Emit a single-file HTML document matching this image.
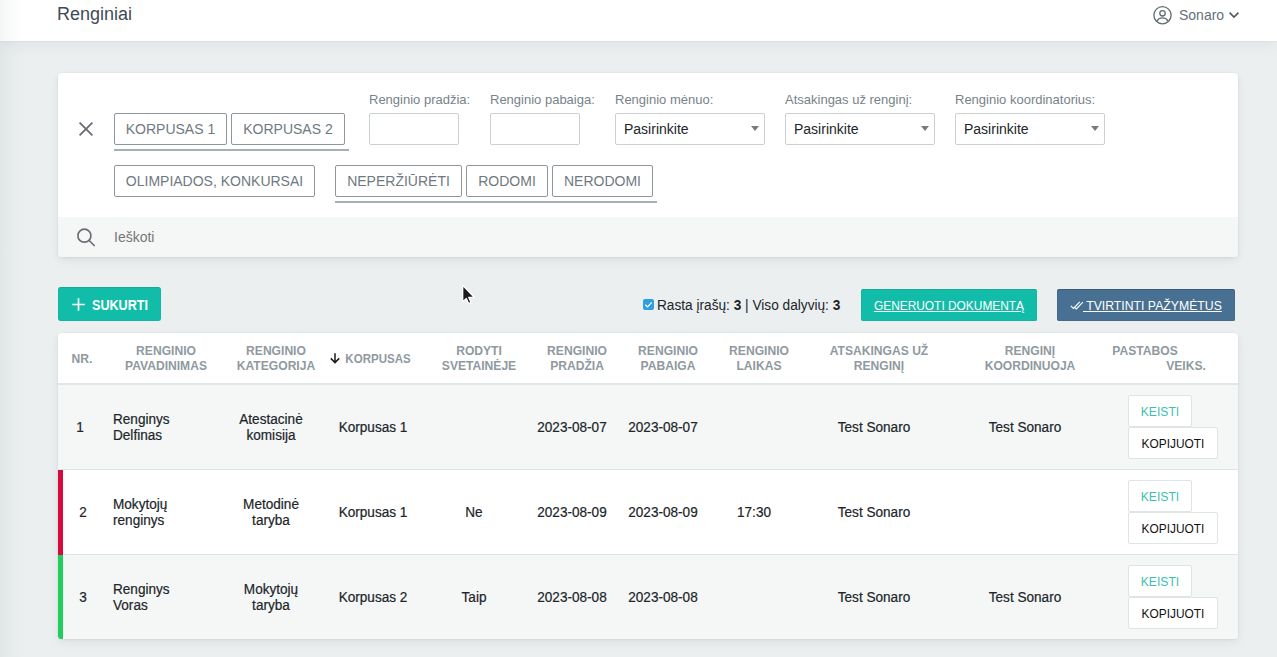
<!DOCTYPE html>
<html lang="lt">
<head>
<meta charset="utf-8">
<title>Renginiai</title>
<style>
*{box-sizing:border-box;margin:0;padding:0}
html,body{width:1277px;height:657px;overflow:hidden}
body{position:relative;background:#ebeff0;font-family:"Liberation Sans",sans-serif;color:#212529;font-size:14px}
.a{position:absolute;white-space:nowrap}
.c{transform:translateX(-50%)}
/* header */
#hdr{left:0;top:0;width:1277px;height:41px;background:#fff;box-shadow:0 1px 0 rgba(4,9,20,.02),0 6px 14px rgba(4,9,20,.04),0 3px 6px rgba(4,9,20,.012)}
#ttl{left:57px;top:1px;font-size:18px;line-height:26px;color:#3f4a56}
#usr{left:1179px;top:6px;font-size:14px;line-height:18px;color:#66717b}
/* left shade */
#lsh{left:0;top:0;width:24px;height:657px;background:linear-gradient(to right,rgba(60,80,90,.06),rgba(60,80,90,.025) 45%,rgba(60,80,90,0))}
/* cards */
.card{background:#fff;border-radius:4px;box-shadow:0 0 0 1px rgba(60,80,100,.025),0 4px 14px rgba(4,9,20,.03),0 3px 8px rgba(4,9,20,.04),0 1px 3px rgba(4,9,20,.03)}
#fc{left:58px;top:73px;width:1180px;height:184px}
#srow{left:0;top:144px;width:1180px;height:40px;background:#f5f7f6;border-radius:0 0 4px 4px}
.ob{height:32px;border:1px solid #90979c;border-radius:2px;background:#fff;color:#6f7981;font-size:14px;line-height:30px;text-align:center}
.ul{height:2px;background:#a6b0b4}
.lbl{font-size:13px;line-height:16px;color:#77828a}
.inp{height:32px;border:1px solid #c9d1d5;border-radius:2px;background:#fff}
.sel{width:150px;font-size:14px;line-height:30px;padding-left:8px;color:#212529}
.sel i{position:absolute;right:5px;top:12px;width:0;height:0;border-left:4px solid transparent;border-right:4px solid transparent;border-top:5px solid #7a7a7a}

.l{transform-origin:0 50%;transform:scaleX(var(--k,1))}
.c{transform:translateX(-50%) scaleX(var(--k,1))}
.tb{height:32px;border-radius:2px;color:#fff;font-size:12.800px;line-height:32px}
.th{font-size:12.800px;line-height:15px;font-weight:bold;color:#8f999f;text-align:center;--k:.945}
.td{font-size:14px;line-height:16px;color:#212529;--k:.97;-webkit-text-stroke:.200px #212529}
.row{left:58px;width:1180px}
.kb{height:32px;border:1px solid #dfe4e5;border-radius:2px;background:#fff;font-size:12.800px;line-height:29px}
</style>
</head>
<body>
<div id="hdr" class="a"></div>
<div id="ttl" class="a">Renginiai</div>
<svg class="a" style="left:1152px;top:5px" width="21" height="21" viewBox="0 0 21 21" fill="none" stroke="#5f6b75" stroke-width="1.3"><circle cx="10.5" cy="10.2" r="8.6"/><circle cx="10.5" cy="8.3" r="2.7"/><path d="M4.9 16.6c1-2.6 3.1-3.8 5.6-3.8s4.600 1.200 5.600 3.800"/></svg>
<div id="usr" class="a">Sonaro</div>
<svg class="a" style="left:1228px;top:10px" width="12" height="10" viewBox="0 0 12 10" fill="none" stroke="#4d5862" stroke-width="1.6"><path d="M1.600 2.600l4.400 4.400 4.400-4.400"/></svg>

<!-- FILTER CARD -->
<div id="fc" class="a card">
  <div id="srow" class="a"></div>
</div>
<!-- filters -->
<svg class="a" style="left:77px;top:120px" width="18" height="18" viewBox="0 0 18 18" fill="none" stroke="#676d72" stroke-width="1.800"><path d="M2.600 2.600l12.800 12.800M15.400 2.600L2.600 15.400"/></svg>
<div class="a ob" style="left:114px;top:113px;width:113px">KORPUSAS 1</div>
<div class="a ob" style="left:231px;top:113px;width:114px">KORPUSAS 2</div>
<div class="a ul" style="left:114px;top:149px;width:235px"></div>
<div class="a ob" style="left:114px;top:165px;width:201px">OLIMPIADOS, KONKURSAI</div>
<div class="a ob" style="left:335px;top:165px;width:127px">NEPERŽIŪRĖTI</div>
<div class="a ob" style="left:466px;top:165px;width:82px">RODOMI</div>
<div class="a ob" style="left:552px;top:165px;width:101px">NERODOMI</div>
<div class="a ul" style="left:335px;top:201px;width:322px"></div>
<div class="a lbl" style="left:369px;top:92px">Renginio pradžia:</div>
<div class="a lbl" style="left:490px;top:92px">Renginio pabaiga:</div>
<div class="a lbl" style="left:615px;top:92px">Renginio mėnuo:</div>
<div class="a lbl" style="left:785px;top:92px">Atsakingas už renginį:</div>
<div class="a lbl" style="left:955px;top:92px">Renginio koordinatorius:</div>
<div class="a inp" style="left:369px;top:113px;width:90px"></div>
<div class="a inp" style="left:490px;top:113px;width:90px"></div>
<div class="a inp sel" style="left:615px;top:113px">Pasirinkite<i></i></div>
<div class="a inp sel" style="left:785px;top:113px">Pasirinkite<i></i></div>
<div class="a inp sel" style="left:955px;top:113px">Pasirinkite<i></i></div>
<svg class="a" style="left:75px;top:226px" width="22" height="22" viewBox="0 0 22 22" fill="none" stroke="#696f74" stroke-width="1.700"><circle cx="9.400" cy="9.700" r="6.500"/><path d="M14.200 14.500l5 5" stroke-linecap="round"/></svg>
<div class="a" style="left:114px;top:228px;font-size:14px;line-height:18px;color:#767676">Ieškoti</div>

<!-- toolbar -->
<div class="a" style="left:58px;top:287px;width:103px;height:34px;border-radius:3px;background:#11bda9;border:1px solid #13b4a1;border-top-color:#17a896"></div>
<svg class="a" style="left:71px;top:297px" width="15" height="15" viewBox="0 0 15 15" fill="none" stroke="#fff" stroke-width="1.700"><path d="M7.500 1.200v12.600M1.200 7.500h12.600"/></svg>
<div class="a l" style="left:92px;top:296px;font-size:14px;line-height:18px;font-weight:bold;color:#fff;--k:.9">SUKURTI</div>
<div class="a" style="left:643px;top:299px;width:11px;height:11px;border-radius:2px;background:#2f9fe3"></div>
<svg class="a" style="left:643px;top:299px" width="11" height="11" viewBox="0 0 11 11" fill="none" stroke="#fff" stroke-width="1.200"><path d="M2.300 5.800l2.200 2.100 4.300-4.600"/></svg>
<div class="a l" style="left:657px;top:296px;font-size:14px;line-height:18px;color:#212529;--k:.976">Rasta įrašų: <b>3</b> | Viso dalyvių: <b>3</b></div>
<div class="a tb" style="left:861px;top:289px;width:176px;background:#11bda9;border:1px solid #13b4a1;border-top-color:#17a896"></div>
<div class="a c" style="left:949px;top:297px;font-size:12.800px;line-height:18px;color:#fff;text-decoration:underline;--k:.93">GENERUOTI DOKUMENTĄ</div>
<div class="a tb" style="left:1057px;top:289px;width:178px;background:#487092;border:1px solid #436a8a;border-top-color:#3b5d7b"></div>
<svg class="a" style="left:1070px;top:300px" width="14" height="11" viewBox="0 0 14 11" fill="none" stroke="#fff" stroke-width="1.100"><path d="M0.800 5.800l2.600 2.600 6.400-6.600M4.600 7.400l1.700 1.500 6.600-6.800"/></svg>
<div class="a l" style="left:1083px;top:297px;font-size:12.800px;line-height:18px;color:#fff;text-decoration:underline;white-space:pre;--k:.957"> TVIRTINTI PAŽYMĖTUS</div>

<!-- table -->
<div class="a card" style="left:58px;top:333px;width:1180px;height:306px"></div>
<div class="a row" style="top:383px;height:2px;background:#e1e6e7"></div>
<div class="a row" style="top:385px;height:84px;background:#f4f7f6"></div>
<div class="a row" style="top:469px;height:1px;background:#dfe4e6"></div>
<div class="a row" style="top:554px;height:1px;background:#dfe4e6"></div>
<div class="a row" style="top:555px;height:84px;background:#f4f7f6;border-radius:0 0 4px 4px"></div>
<div class="a" style="left:58px;top:470px;width:5px;height:85px;background:#d8093b"></div>
<div class="a" style="left:58px;top:555px;width:5px;height:84px;background:#1fce5d;border-radius:0 0 0 3px"></div>
<div class="a c th" style="left:82.3px;top:351px">NR.</div>
<div class="a c th" style="left:165.5px;top:343px">RENGINIO<br>PAVADINIMAS</div>
<div class="a c th" style="left:276.3px;top:343px">RENGINIO<br>KATEGORIJA</div>
<svg class="a" style="left:329px;top:352px" width="12" height="12" viewBox="0 0 12 12" fill="none" stroke="#1a1a1a" stroke-width="1.500"><path d="M6 1.200v9.300M1.800 6.400l4.200 4.200 4.200-4.200"/></svg>
<div class="a c th" style="left:378.300px;top:351px;--k:.9">KORPUSAS</div>
<div class="a c th" style="left:478.8px;top:343px">RODYTI<br>SVETAINĖJE</div>
<div class="a c th" style="left:576.5px;top:343px">RENGINIO<br>PRADŽIA</div>
<div class="a c th" style="left:667.7px;top:343px">RENGINIO<br>PABAIGA</div>
<div class="a c th" style="left:759px;top:343px">RENGINIO<br>LAIKAS</div>
<div class="a c th" style="left:878.5px;top:343px">ATSAKINGAS UŽ<br>RENGINĮ</div>
<div class="a c th" style="left:1029.8px;top:343px">RENGINĮ<br>KOORDINUOJA</div>
<div class="a c th" style="left:1145px;top:343px">PASTABOS</div>
<div class="a c th" style="left:1186.2px;top:358px">VEIKS.</div>
<div class="a c td" style="left:80px;top:419px;text-align:center">1</div>
<div class="a l td" style="left:113px;top:411px">Renginys<br>Delfinas</div>
<div class="a c td" style="left:271.3px;top:411px;text-align:center">Atestacinė<br>komisija</div>
<div class="a c td" style="left:372.5px;top:419px;text-align:center">Korpusas 1</div>
<div class="a c td" style="left:571.5px;top:419px;text-align:center">2023-08-07</div>
<div class="a c td" style="left:662.5px;top:419px;text-align:center">2023-08-07</div>
<div class="a c td" style="left:873.5px;top:419px;text-align:center">Test Sonaro</div>
<div class="a c td" style="left:1025px;top:419px;text-align:center">Test Sonaro</div>
<div class="a kb" style="left:1128px;top:395px;width:64px"></div>
<div class="a c" style="left:1160px;top:403px;font-size:12.800px;line-height:18px;color:#3dbfb0;--k:.95">KEISTI</div>
<div class="a kb" style="left:1128px;top:427px;width:90px"></div>
<div class="a c" style="left:1173px;top:435px;font-size:12.800px;line-height:18px;color:#111;--k:.93">KOPIJUOTI</div>
<div class="a c td" style="left:83px;top:504px;text-align:center">2</div>
<div class="a l td" style="left:113px;top:496px">Mokytojų<br>renginys</div>
<div class="a c td" style="left:271.3px;top:496px;text-align:center">Metodinė<br>taryba</div>
<div class="a c td" style="left:372.5px;top:504px;text-align:center">Korpusas 1</div>
<div class="a c td" style="left:473.7px;top:504px;text-align:center">Ne</div>
<div class="a c td" style="left:571.5px;top:504px;text-align:center">2023-08-09</div>
<div class="a c td" style="left:662.5px;top:504px;text-align:center">2023-08-09</div>
<div class="a c td" style="left:754.1px;top:504px;text-align:center">17:30</div>
<div class="a c td" style="left:873.5px;top:504px;text-align:center">Test Sonaro</div>
<div class="a kb" style="left:1128px;top:480px;width:64px"></div>
<div class="a c" style="left:1160px;top:488px;font-size:12.800px;line-height:18px;color:#3dbfb0;--k:.95">KEISTI</div>
<div class="a kb" style="left:1128px;top:512px;width:90px"></div>
<div class="a c" style="left:1173px;top:520px;font-size:12.800px;line-height:18px;color:#111;--k:.93">KOPIJUOTI</div>
<div class="a c td" style="left:83px;top:589px;text-align:center">3</div>
<div class="a l td" style="left:113px;top:581px">Renginys<br>Voras</div>
<div class="a c td" style="left:271.3px;top:581px;text-align:center">Mokytojų<br>taryba</div>
<div class="a c td" style="left:372.5px;top:589px;text-align:center">Korpusas 2</div>
<div class="a c td" style="left:473.7px;top:589px;text-align:center">Taip</div>
<div class="a c td" style="left:571.5px;top:589px;text-align:center">2023-08-08</div>
<div class="a c td" style="left:662.5px;top:589px;text-align:center">2023-08-08</div>
<div class="a c td" style="left:873.5px;top:589px;text-align:center">Test Sonaro</div>
<div class="a c td" style="left:1025px;top:589px;text-align:center">Test Sonaro</div>
<div class="a kb" style="left:1128px;top:565px;width:64px"></div>
<div class="a c" style="left:1160px;top:573px;font-size:12.800px;line-height:18px;color:#3dbfb0;--k:.95">KEISTI</div>
<div class="a kb" style="left:1128px;top:597px;width:90px"></div>
<div class="a c" style="left:1173px;top:605px;font-size:12.800px;line-height:18px;color:#111;--k:.93">KOPIJUOTI</div>

<svg class="a" style="left:458px;top:282px" width="20" height="26" viewBox="458 282 20 26"><path d="M462.700 285.300V301.900L466.300 298.500L468.600 303.500L471 302.400L468.700 297.300H474.200Z" fill="#1a1a1a" stroke="#fff" stroke-width="1.300" stroke-linejoin="round"/></svg>
<div id="lsh" class="a"></div>
</body>
</html>
